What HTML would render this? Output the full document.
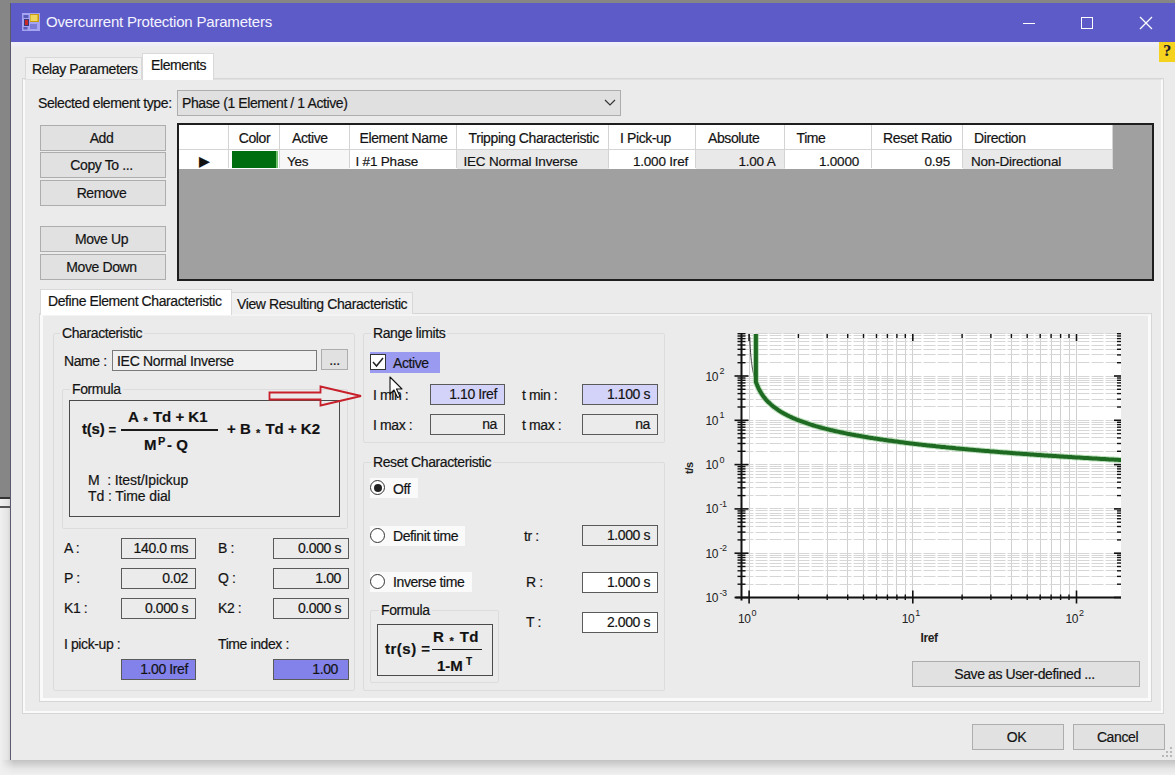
<!DOCTYPE html>
<html><head><meta charset="utf-8">
<style>
*{box-sizing:border-box;margin:0;padding:0}
html,body{width:1175px;height:775px;overflow:hidden;background:#868686}
body{position:relative;font-family:"Liberation Sans",sans-serif;font-size:14px;color:#111;letter-spacing:-0.4px;-webkit-text-stroke:0.2px #222}
.a{position:absolute}
.win{left:10px;top:3px;width:1170px;height:757px;background:#ebebeb;border-left:1px solid #5a5a6c}
.title{left:11px;top:3px;width:1164px;height:38.5px;background:#5d5bc8}
.ttl{left:46px;top:13px;color:#f4f4ff;font-size:15px;letter-spacing:-0.2px;-webkit-text-stroke:0}
.btn{background:#e1e1e1;border:1px solid #adadad;text-align:center;line-height:24.5px;padding-right:3px}
.tb{background:#ebebeb;border:1px solid #5a5a5a;text-align:right;padding-right:7px;line-height:18px}
.grp{border:1px solid #dcdcdc;border-radius:2px}
.gt{background:#ebebeb;padding:0 2px;line-height:16px}
.lbl{line-height:16px}
.fb{font-weight:bold;font-size:15px;line-height:16px;letter-spacing:0}
.ast{font-size:11px;position:relative;top:2.5px;padding:0 1px}
.rad{width:15px;height:15px;border:1px solid #333;border-radius:50%;background:#fff}
.gh{height:24px;line-height:27px;overflow:hidden;white-space:nowrap}
.gd{height:18.5px;line-height:24px;overflow:hidden;white-space:nowrap;font-size:13.5px;letter-spacing:-0.2px}
</style></head><body>
<!-- background left lower -->
<div class="a" style="left:0;top:497px;width:11px;height:278px;background:linear-gradient(90deg,#f0f0f0,#e4e4e4 70%,#d0d0d0)"></div>
<div class="a" style="left:0;top:497px;width:11px;height:2px;background:#333"></div>
<div class="a" style="left:0;top:506px;width:11px;height:2px;background:#555"></div>
<div class="a" style="left:0;top:760px;width:1175px;height:15px;background:linear-gradient(#c2c2c2,#e6e6e6 60%,#f0f0f0)"></div><div class="a" style="left:0;top:760px;width:14px;height:15px;background:linear-gradient(90deg,#f0f0f0,rgba(240,240,240,0))"></div>
<div class="a win"></div>
<div class="a title"></div>
<div class="a" style="left:11px;top:41.5px;width:1164px;height:7px;background:linear-gradient(#f0f0fc,#ebebeb)"></div>
<!-- app icon -->
<svg class="a" style="left:22px;top:13px" width="18" height="18"><rect x="0" y="0" width="18" height="18" fill="#a4a4f2"/><rect x="1.5" y="2" width="5" height="3" fill="#5a5ab8"/><rect x="8" y="1" width="9" height="8" fill="#c79a10"/><rect x="8.5" y="2" width="7" height="6" fill="#f0d860"/><rect x="2" y="6" width="5" height="7" fill="#3a3a7a"/><rect x="3" y="7" width="3" height="5" fill="#c82828"/><rect x="1.5" y="14" width="4" height="2.5" fill="#5a5ab8"/><rect x="8" y="11" width="7" height="5" fill="#7c7cd8"/></svg>
<div class="a ttl">Overcurrent Protection Parameters</div>
<!-- window controls -->
<div class="a" style="left:1023px;top:22.5px;width:12px;height:1px;background:#fff"></div>
<div class="a" style="left:1081px;top:17px;width:12px;height:12px;border:1px solid #fff"></div>
<svg class="a" style="left:1139px;top:16px" width="14" height="14"><path d="M1 1L13 13M13 1L1 13" stroke="#fff" stroke-width="1.3"/></svg>
<!-- help -->
<div class="a" style="left:1159px;top:42px;width:16px;height:20px;background:#f5d21e;font-weight:bold;font-size:16px;line-height:17px;text-align:center;color:#1a1a2a;font-family:'Liberation Serif',serif">?</div>

<!-- outer tabs -->
<div class="a" style="left:22px;top:78px;width:1142px;height:636px;border:1px solid #d6d6d6"></div><div class="a" style="left:23px;top:79px;width:1140px;height:634px;border:2px solid #fafafa;border-top:1px solid #e0e0e0"></div>
<div class="a" style="left:25px;top:57px;width:117px;height:22px;border:1px solid #d9d9d9;border-bottom:none;background:#f0f0f0"></div>
<div class="a lbl" style="left:32px;top:61px">Relay Parameters</div>
<div class="a" style="left:142px;top:53px;width:72px;height:27px;border:1px solid #d9d9d9;border-bottom:none;background:#fff"></div>
<div class="a lbl" style="left:151px;top:57px">Elements</div>

<div class="a lbl" style="left:38px;top:95px">Selected element type:</div>
<div class="a" style="left:177px;top:90px;width:444px;height:26px;background:#e0e0e0;border:1px solid #adadad"></div>
<div class="a lbl" style="left:182px;top:95px">Phase (1 Element / 1 Active)</div>
<svg class="a" style="left:604px;top:99px" width="12" height="8"><path d="M1 1L6 6L11 1" stroke="#333" fill="none" stroke-width="1.2"/></svg>

<!-- left buttons -->
<div class="a btn" style="left:40px;top:125px;width:126px;height:26px">Add</div>
<div class="a btn" style="left:40px;top:152px;width:126px;height:26px">Copy To ...</div>
<div class="a btn" style="left:40px;top:180px;width:126px;height:26px">Remove</div>
<div class="a btn" style="left:40px;top:226px;width:126px;height:26px">Move Up</div>
<div class="a btn" style="left:40px;top:254px;width:126px;height:26px">Move Down</div>

<!-- grid -->
<div class="a" style="left:177px;top:123px;width:977px;height:158px;background:#a0a0a0;border:2px solid #1e1e1e"></div>
<div class="a" style="left:179px;top:125px;width:934px;height:25px;background:#fff"></div>
<div class="a gh" style="left:179px;top:125px;width:50px;text-align:center;"></div>
<div class="a gh" style="left:229px;top:125px;width:51px;text-align:center;">Color</div>
<div class="a gh" style="left:280px;top:125px;width:69.5px;text-align:left;padding-left:12px;">Active</div>
<div class="a gh" style="left:349.5px;top:125px;width:107.0px;text-align:left;padding-left:10px;">Element Name</div>
<div class="a gh" style="left:456.5px;top:125px;width:152.5px;text-align:left;padding-left:12px;">Tripping Characteristic</div>
<div class="a gh" style="left:609px;top:125px;width:87px;text-align:left;padding-left:11px;">I Pick-up</div>
<div class="a gh" style="left:696px;top:125px;width:88.5px;text-align:left;padding-left:12px;">Absolute</div>
<div class="a gh" style="left:784.5px;top:125px;width:87.5px;text-align:left;padding-left:12px;">Time</div>
<div class="a gh" style="left:872px;top:125px;width:91px;text-align:left;padding-left:11px;">Reset Ratio</div>
<div class="a gh" style="left:963px;top:125px;width:150px;text-align:left;padding-left:11px;">Direction</div>
<div class="a gd" style="left:179px;top:150px;width:50px;background:#fff;text-align:center;">▶</div>
<div class="a gd" style="left:229px;top:150px;width:51px;background:#fff;text-align:center;"></div>
<div class="a gd" style="left:280px;top:150px;width:69.5px;background:#f7f7f7;text-align:left;padding-left:7px;">Yes</div>
<div class="a gd" style="left:349.5px;top:150px;width:107.0px;background:#fff;text-align:left;padding-left:6px;">I #1 Phase</div>
<div class="a gd" style="left:456.5px;top:150px;width:152.5px;background:#e9e9e9;text-align:left;padding-left:7px;">IEC Normal Inverse</div>
<div class="a gd" style="left:609px;top:150px;width:87px;background:#fff;text-align:right;padding-right:8px;">1.000 Iref</div>
<div class="a gd" style="left:696px;top:150px;width:88.5px;background:#e9e9e9;text-align:right;padding-right:9px;">1.00 A</div>
<div class="a gd" style="left:784.5px;top:150px;width:87.5px;background:#fff;text-align:right;padding-right:13px;">1.0000</div>
<div class="a gd" style="left:872px;top:150px;width:91px;background:#fff;text-align:right;padding-right:13px;">0.95</div>
<div class="a gd" style="left:963px;top:150px;width:150px;background:#e9e9e9;text-align:left;padding-left:8px;">Non-Directional</div>
<div class="a" style="left:228px;top:125px;width:1px;height:43px;background:#d4d4d4"></div>
<div class="a" style="left:279px;top:125px;width:1px;height:43px;background:#d4d4d4"></div>
<div class="a" style="left:348.5px;top:125px;width:1px;height:43px;background:#d4d4d4"></div>
<div class="a" style="left:455.5px;top:125px;width:1px;height:43px;background:#d4d4d4"></div>
<div class="a" style="left:608px;top:125px;width:1px;height:43px;background:#d4d4d4"></div>
<div class="a" style="left:695px;top:125px;width:1px;height:43px;background:#d4d4d4"></div>
<div class="a" style="left:783.5px;top:125px;width:1px;height:43px;background:#d4d4d4"></div>
<div class="a" style="left:871px;top:125px;width:1px;height:43px;background:#d4d4d4"></div>
<div class="a" style="left:962px;top:125px;width:1px;height:43px;background:#d4d4d4"></div>
<div class="a" style="left:1112px;top:125px;width:1px;height:43px;background:#d4d4d4"></div>
<div class="a" style="left:179px;top:149px;width:934px;height:1px;background:#d4d4d4"></div>
<div class="a" style="left:232px;top:151px;width:46px;height:17px;background:#006e0e;border-right:2px solid #6fbf6f"></div>

<!-- inner tabs -->
<div class="a" style="left:39px;top:313px;width:1113px;height:389px;border:1px solid #d6d6d6"></div><div class="a" style="left:40px;top:314px;width:1111px;height:387px;border:3px solid #fafafa;border-top:2px solid #f4f4f4"></div>
<div class="a" style="left:40px;top:289px;width:192px;height:26px;border:1px solid #d9d9d9;border-bottom:none;background:#fff"></div>
<div class="a lbl" style="left:48px;top:293px">Define Element Characteristic</div>
<div class="a" style="left:231px;top:292px;width:182px;height:22px;border:1px solid #d9d9d9;border-bottom:none;background:#f0f0f0"></div>
<div class="a lbl" style="left:237px;top:296px">View Resulting Characteristic</div>

<!-- Characteristic group -->
<div class="a grp" style="left:53px;top:333px;width:302px;height:358px"></div>
<div class="a gt" style="left:60px;top:325px">Characteristic</div>
<div class="a lbl" style="left:64px;top:353px">Name :</div>
<div class="a" style="left:112px;top:350px;width:205px;height:21px;background:#f0f0f0;border:1px solid #7a7a7a"></div>
<div class="a lbl" style="left:117px;top:353px;font-size:14px;letter-spacing:-0.3px">IEC Normal Inverse</div>
<div class="a btn" style="left:321px;top:349px;width:27px;height:21px;line-height:21px;padding:0">...</div>

<div class="a grp" style="left:62px;top:389px;width:286px;height:140px"></div>
<div class="a gt" style="left:70px;top:381px">Formula</div>
<div class="a" style="left:69px;top:400px;width:271px;height:117px;border:1.5px solid #4a4a4a"></div>

<div class="a fb" style="left:82px;top:421px;letter-spacing:-0.2px">t(s) <span style="font-size:13px">=</span></div>
<div class="a fb" style="left:128px;top:409px">A <span class="ast">*</span> Td + K1</div>
<div class="a" style="left:121px;top:429px;width:97px;height:1.6px;background:#1a1a1a"></div>
<div class="a fb" style="left:144px;top:437px">M</div>
<div class="a fb" style="left:158px;top:433px;font-size:11px">P</div>
<div class="a fb" style="left:167px;top:437px">- Q</div>
<div class="a fb" style="left:227px;top:421px">+ B <span class="ast">*</span> Td + K2</div>
<div class="a lbl" style="left:88px;top:472px;font-size:14px;letter-spacing:-0.1px">M&nbsp; : Itest/Ipickup</div>
<div class="a lbl" style="left:88px;top:488px;font-size:14px;letter-spacing:-0.1px">Td : Time dial</div>
<svg class="a" style="left:268px;top:384px" width="98" height="24"><path d="M1.5 8.5H52.5V2.5L93 12L52.5 21.5V15.5H1.5Z" fill="none" stroke="#c8202a" stroke-width="1.8"/></svg>


<!-- A..K2 -->
<div class="a lbl" style="left:64px;top:540px">A :</div>
<div class="a tb" style="left:121px;top:538px;width:75px;height:21px">140.0 ms</div>
<div class="a lbl" style="left:218px;top:540px">B :</div>
<div class="a tb" style="left:273px;top:538px;width:76px;height:21px">0.000 s</div>
<div class="a lbl" style="left:64px;top:570px">P :</div>
<div class="a tb" style="left:121px;top:568px;width:75px;height:21px">0.02</div>
<div class="a lbl" style="left:218px;top:570px">Q :</div>
<div class="a tb" style="left:273px;top:568px;width:76px;height:21px">1.00</div>
<div class="a lbl" style="left:64px;top:600px">K1 :</div>
<div class="a tb" style="left:121px;top:598px;width:75px;height:21px">0.000 s</div>
<div class="a lbl" style="left:218px;top:600px">K2 :</div>
<div class="a tb" style="left:273px;top:598px;width:76px;height:21px">0.000 s</div>
<div class="a lbl" style="left:64px;top:636px">I pick-up :</div>
<div class="a lbl" style="left:218px;top:636px">Time index :</div>
<div class="a tb" style="left:121px;top:659px;width:75px;height:21px;background:#8282ea">1.00 Iref</div>
<div class="a tb" style="left:273px;top:659px;width:76px;height:21px;background:#8282ea;padding-right:10px">1.00</div>

<!-- Range limits -->
<div class="a grp" style="left:363px;top:333px;width:302px;height:110px"></div>
<div class="a gt" style="left:371px;top:325px">Range limits</div>
<div class="a" style="left:370px;top:352px;width:70px;height:21px;background:#9a9af0"></div>
<div class="a" style="left:370px;top:354px;width:16px;height:16px;border:1px solid #333;background:#fff"></div>
<svg class="a" style="left:371px;top:355px" width="14" height="14"><path d="M2 7L5.5 11L12 3" stroke="#222" fill="none" stroke-width="1.5"/></svg>
<div class="a lbl" style="left:393px;top:355px">Active</div>
<div class="a lbl" style="left:373px;top:387px">I min :</div>
<div class="a tb" style="left:430px;top:384px;width:75px;height:21px;background:#d3d3fa">1.10 Iref</div>
<div class="a lbl" style="left:522px;top:387px">t min :</div>
<div class="a tb" style="left:582px;top:384px;width:76px;height:21px;background:#d3d3fa">1.100 s</div>
<div class="a lbl" style="left:373px;top:417px">I max :</div>
<div class="a tb" style="left:430px;top:414px;width:75px;height:21px">na</div>
<div class="a lbl" style="left:522px;top:417px">t max :</div>
<div class="a tb" style="left:582px;top:414px;width:76px;height:21px">na</div>

<!-- Reset characteristic -->
<div class="a grp" style="left:363px;top:462px;width:302px;height:229px"></div>
<div class="a gt" style="left:371px;top:454px">Reset Characteristic</div>

<div class="a" style="left:370px;top:478px;width:48px;height:20px;background:#fafafa"></div>
<div class="a rad" style="left:370px;top:480px"></div>
<div class="a" style="left:373.5px;top:483.5px;width:8px;height:8px;border-radius:50%;background:#222"></div>
<div class="a lbl" style="left:393px;top:481px">Off</div>
<div class="a" style="left:370px;top:526px;width:95px;height:20px;background:#fafafa"></div>
<div class="a rad" style="left:370px;top:528px"></div>
<div class="a lbl" style="left:393px;top:528px">Definit time</div>
<div class="a" style="left:370px;top:572px;width:102px;height:20px;background:#fafafa"></div>
<div class="a rad" style="left:370px;top:574px"></div>
<div class="a lbl" style="left:393px;top:574px">Inverse time</div>
<div class="a lbl" style="left:524px;top:528px">tr :</div>
<div class="a tb" style="left:582px;top:525px;width:76px;height:21px">1.000 s</div>
<div class="a lbl" style="left:526px;top:574px">R :</div>
<div class="a tb" style="left:582px;top:572px;width:76px;height:21px;background:#fff">1.000 s</div>
<div class="a lbl" style="left:526px;top:614px">T :</div>
<div class="a tb" style="left:582px;top:612px;width:76px;height:21px;background:#fff">2.000 s</div>
<div class="a grp" style="left:370px;top:610px;width:129px;height:73px"></div>
<div class="a gt" style="left:379px;top:602px">Formula</div>
<div class="a" style="left:377px;top:624px;width:116px;height:52px;border:1.5px solid #4a4a4a"></div>
<div class="a fb" style="left:385px;top:641px;font-size:15px;letter-spacing:0.5px">tr(s) =</div>
<div class="a fb" style="left:433px;top:629px;letter-spacing:0.3px">R <span class="ast">*</span> Td</div>
<div class="a" style="left:432px;top:648.5px;width:50px;height:1.5px;background:#1a1a1a"></div>
<div class="a fb" style="left:437px;top:658px">1-M</div>
<div class="a fb" style="left:466px;top:654px;font-size:10px">T</div>
<svg class="a" style="left:389px;top:376px" width="16" height="24"><path d="M1 1V18L5 14L8.5 21.5L11 20.5L7.5 13H13Z" fill="#fff" stroke="#111" stroke-width="1.1" stroke-linejoin="round"/></svg>


<!-- chart -->
<svg class="a" style="left:0;top:0" width="1175" height="775">
<defs><clipPath id="pc"><rect x="741.5" y="331" width="379.5" height="266.5"/></clipPath></defs>
<rect x="741.5" y="334" width="379.5" height="263.5" fill="#fff"/>
<line x1="749.5" y1="334" x2="749.5" y2="597.5" stroke="#d0d0d0" stroke-width="1"/>
<line x1="798.5" y1="334" x2="798.5" y2="597.5" stroke="#d0d0d0" stroke-width="1"/>
<line x1="827.5" y1="334" x2="827.5" y2="597.5" stroke="#d0d0d0" stroke-width="1"/>
<line x1="847.5" y1="334" x2="847.5" y2="597.5" stroke="#d0d0d0" stroke-width="1"/>
<line x1="863.5" y1="334" x2="863.5" y2="597.5" stroke="#d0d0d0" stroke-width="1"/>
<line x1="876.5" y1="334" x2="876.5" y2="597.5" stroke="#d0d0d0" stroke-width="1"/>
<line x1="887.5" y1="334" x2="887.5" y2="597.5" stroke="#d0d0d0" stroke-width="1"/>
<line x1="896.5" y1="334" x2="896.5" y2="597.5" stroke="#d0d0d0" stroke-width="1"/>
<line x1="905.5" y1="334" x2="905.5" y2="597.5" stroke="#d0d0d0" stroke-width="1"/>
<line x1="912.5" y1="334" x2="912.5" y2="597.5" stroke="#d0d0d0" stroke-width="1"/>
<line x1="962.5" y1="334" x2="962.5" y2="597.5" stroke="#d0d0d0" stroke-width="1"/>
<line x1="990.5" y1="334" x2="990.5" y2="597.5" stroke="#d0d0d0" stroke-width="1"/>
<line x1="1011.5" y1="334" x2="1011.5" y2="597.5" stroke="#d0d0d0" stroke-width="1"/>
<line x1="1027.5" y1="334" x2="1027.5" y2="597.5" stroke="#d0d0d0" stroke-width="1"/>
<line x1="1040.5" y1="334" x2="1040.5" y2="597.5" stroke="#d0d0d0" stroke-width="1"/>
<line x1="1051.5" y1="334" x2="1051.5" y2="597.5" stroke="#d0d0d0" stroke-width="1"/>
<line x1="1060.5" y1="334" x2="1060.5" y2="597.5" stroke="#d0d0d0" stroke-width="1"/>
<line x1="1069.5" y1="334" x2="1069.5" y2="597.5" stroke="#d0d0d0" stroke-width="1"/>
<line x1="1076.5" y1="334" x2="1076.5" y2="597.5" stroke="#d0d0d0" stroke-width="1"/>
<line x1="741.5" y1="584.5" x2="1121" y2="584.5" stroke="#d6d6d6" stroke-width="1" stroke-dasharray="12 2"/>
<line x1="741.5" y1="576.5" x2="1121" y2="576.5" stroke="#d6d6d6" stroke-width="1" stroke-dasharray="12 2"/>
<line x1="741.5" y1="570.5" x2="1121" y2="570.5" stroke="#d6d6d6" stroke-width="1" stroke-dasharray="12 2"/>
<line x1="741.5" y1="566.5" x2="1121" y2="566.5" stroke="#d6d6d6" stroke-width="1" stroke-dasharray="12 2"/>
<line x1="741.5" y1="563.5" x2="1121" y2="563.5" stroke="#d6d6d6" stroke-width="1" stroke-dasharray="12 2"/>
<line x1="741.5" y1="560.5" x2="1121" y2="560.5" stroke="#d6d6d6" stroke-width="1" stroke-dasharray="12 2"/>
<line x1="741.5" y1="557.5" x2="1121" y2="557.5" stroke="#d6d6d6" stroke-width="1" stroke-dasharray="12 2"/>
<line x1="741.5" y1="555.5" x2="1121" y2="555.5" stroke="#d6d6d6" stroke-width="1" stroke-dasharray="12 2"/>
<line x1="741.5" y1="553.5" x2="1121" y2="553.5" stroke="#d6d6d6" stroke-width="1" stroke-dasharray="12 2"/>
<line x1="741.5" y1="539.5" x2="1121" y2="539.5" stroke="#d6d6d6" stroke-width="1" stroke-dasharray="12 2"/>
<line x1="741.5" y1="532.5" x2="1121" y2="532.5" stroke="#d6d6d6" stroke-width="1" stroke-dasharray="12 2"/>
<line x1="741.5" y1="526.5" x2="1121" y2="526.5" stroke="#d6d6d6" stroke-width="1" stroke-dasharray="12 2"/>
<line x1="741.5" y1="522.5" x2="1121" y2="522.5" stroke="#d6d6d6" stroke-width="1" stroke-dasharray="12 2"/>
<line x1="741.5" y1="518.5" x2="1121" y2="518.5" stroke="#d6d6d6" stroke-width="1" stroke-dasharray="12 2"/>
<line x1="741.5" y1="515.5" x2="1121" y2="515.5" stroke="#d6d6d6" stroke-width="1" stroke-dasharray="12 2"/>
<line x1="741.5" y1="513.5" x2="1121" y2="513.5" stroke="#d6d6d6" stroke-width="1" stroke-dasharray="12 2"/>
<line x1="741.5" y1="510.5" x2="1121" y2="510.5" stroke="#d6d6d6" stroke-width="1" stroke-dasharray="12 2"/>
<line x1="741.5" y1="508.5" x2="1121" y2="508.5" stroke="#d6d6d6" stroke-width="1" stroke-dasharray="12 2"/>
<line x1="741.5" y1="495.5" x2="1121" y2="495.5" stroke="#d6d6d6" stroke-width="1" stroke-dasharray="12 2"/>
<line x1="741.5" y1="487.5" x2="1121" y2="487.5" stroke="#d6d6d6" stroke-width="1" stroke-dasharray="12 2"/>
<line x1="741.5" y1="482.5" x2="1121" y2="482.5" stroke="#d6d6d6" stroke-width="1" stroke-dasharray="12 2"/>
<line x1="741.5" y1="477.5" x2="1121" y2="477.5" stroke="#d6d6d6" stroke-width="1" stroke-dasharray="12 2"/>
<line x1="741.5" y1="474.5" x2="1121" y2="474.5" stroke="#d6d6d6" stroke-width="1" stroke-dasharray="12 2"/>
<line x1="741.5" y1="471.5" x2="1121" y2="471.5" stroke="#d6d6d6" stroke-width="1" stroke-dasharray="12 2"/>
<line x1="741.5" y1="468.5" x2="1121" y2="468.5" stroke="#d6d6d6" stroke-width="1" stroke-dasharray="12 2"/>
<line x1="741.5" y1="466.5" x2="1121" y2="466.5" stroke="#d6d6d6" stroke-width="1" stroke-dasharray="12 2"/>
<line x1="741.5" y1="464.5" x2="1121" y2="464.5" stroke="#d6d6d6" stroke-width="1" stroke-dasharray="12 2"/>
<line x1="741.5" y1="451.5" x2="1121" y2="451.5" stroke="#d6d6d6" stroke-width="1" stroke-dasharray="12 2"/>
<line x1="741.5" y1="443.5" x2="1121" y2="443.5" stroke="#d6d6d6" stroke-width="1" stroke-dasharray="12 2"/>
<line x1="741.5" y1="437.5" x2="1121" y2="437.5" stroke="#d6d6d6" stroke-width="1" stroke-dasharray="12 2"/>
<line x1="741.5" y1="433.5" x2="1121" y2="433.5" stroke="#d6d6d6" stroke-width="1" stroke-dasharray="12 2"/>
<line x1="741.5" y1="430.5" x2="1121" y2="430.5" stroke="#d6d6d6" stroke-width="1" stroke-dasharray="12 2"/>
<line x1="741.5" y1="427.5" x2="1121" y2="427.5" stroke="#d6d6d6" stroke-width="1" stroke-dasharray="12 2"/>
<line x1="741.5" y1="424.5" x2="1121" y2="424.5" stroke="#d6d6d6" stroke-width="1" stroke-dasharray="12 2"/>
<line x1="741.5" y1="422.5" x2="1121" y2="422.5" stroke="#d6d6d6" stroke-width="1" stroke-dasharray="12 2"/>
<line x1="741.5" y1="420.5" x2="1121" y2="420.5" stroke="#d6d6d6" stroke-width="1" stroke-dasharray="12 2"/>
<line x1="741.5" y1="406.5" x2="1121" y2="406.5" stroke="#d6d6d6" stroke-width="1" stroke-dasharray="12 2"/>
<line x1="741.5" y1="399.5" x2="1121" y2="399.5" stroke="#d6d6d6" stroke-width="1" stroke-dasharray="12 2"/>
<line x1="741.5" y1="393.5" x2="1121" y2="393.5" stroke="#d6d6d6" stroke-width="1" stroke-dasharray="12 2"/>
<line x1="741.5" y1="389.5" x2="1121" y2="389.5" stroke="#d6d6d6" stroke-width="1" stroke-dasharray="12 2"/>
<line x1="741.5" y1="385.5" x2="1121" y2="385.5" stroke="#d6d6d6" stroke-width="1" stroke-dasharray="12 2"/>
<line x1="741.5" y1="382.5" x2="1121" y2="382.5" stroke="#d6d6d6" stroke-width="1" stroke-dasharray="12 2"/>
<line x1="741.5" y1="380.5" x2="1121" y2="380.5" stroke="#d6d6d6" stroke-width="1" stroke-dasharray="12 2"/>
<line x1="741.5" y1="378.5" x2="1121" y2="378.5" stroke="#d6d6d6" stroke-width="1" stroke-dasharray="12 2"/>
<line x1="741.5" y1="376.5" x2="1121" y2="376.5" stroke="#d6d6d6" stroke-width="1" stroke-dasharray="12 2"/>
<line x1="741.5" y1="362.5" x2="1121" y2="362.5" stroke="#d6d6d6" stroke-width="1" stroke-dasharray="12 2"/>
<line x1="741.5" y1="354.5" x2="1121" y2="354.5" stroke="#d6d6d6" stroke-width="1" stroke-dasharray="12 2"/>
<line x1="741.5" y1="349.5" x2="1121" y2="349.5" stroke="#d6d6d6" stroke-width="1" stroke-dasharray="12 2"/>
<line x1="741.5" y1="345.5" x2="1121" y2="345.5" stroke="#d6d6d6" stroke-width="1" stroke-dasharray="12 2"/>
<line x1="741.5" y1="341.5" x2="1121" y2="341.5" stroke="#d6d6d6" stroke-width="1" stroke-dasharray="12 2"/>
<line x1="741.5" y1="338.5" x2="1121" y2="338.5" stroke="#d6d6d6" stroke-width="1" stroke-dasharray="12 2"/>
<line x1="741.5" y1="335.5" x2="1121" y2="335.5" stroke="#d6d6d6" stroke-width="1" stroke-dasharray="12 2"/>
<line x1="741.5" y1="333.5" x2="1121" y2="333.5" stroke="#d6d6d6" stroke-width="1" stroke-dasharray="12 2"/>
<line x1="741.5" y1="334" x2="741.5" y2="600.5" stroke="#111" stroke-width="2"/>
<line x1="735.5" y1="597.5" x2="1121" y2="597.5" stroke="#111" stroke-width="2"/>
<line x1="734.5" y1="597.5" x2="748.5" y2="597.5" stroke="#111" stroke-width="1.6"/>
<line x1="1114" y1="597.5" x2="1121" y2="597.5" stroke="#111" stroke-width="1.6"/>
<line x1="737.5" y1="584.2" x2="745.5" y2="584.2" stroke="#111" stroke-width="1.4"/>
<line x1="1117" y1="584.2" x2="1121" y2="584.2" stroke="#111" stroke-width="1.4"/>
<line x1="737.5" y1="576.4" x2="745.5" y2="576.4" stroke="#111" stroke-width="1.4"/>
<line x1="1117" y1="576.4" x2="1121" y2="576.4" stroke="#111" stroke-width="1.4"/>
<line x1="737.5" y1="570.8" x2="745.5" y2="570.8" stroke="#111" stroke-width="1.4"/>
<line x1="1117" y1="570.8" x2="1121" y2="570.8" stroke="#111" stroke-width="1.4"/>
<line x1="737.5" y1="566.5" x2="745.5" y2="566.5" stroke="#111" stroke-width="1.4"/>
<line x1="1117" y1="566.5" x2="1121" y2="566.5" stroke="#111" stroke-width="1.4"/>
<line x1="737.5" y1="563.0" x2="745.5" y2="563.0" stroke="#111" stroke-width="1.4"/>
<line x1="1117" y1="563.0" x2="1121" y2="563.0" stroke="#111" stroke-width="1.4"/>
<line x1="737.5" y1="560.1" x2="745.5" y2="560.1" stroke="#111" stroke-width="1.4"/>
<line x1="1117" y1="560.1" x2="1121" y2="560.1" stroke="#111" stroke-width="1.4"/>
<line x1="737.5" y1="557.5" x2="745.5" y2="557.5" stroke="#111" stroke-width="1.4"/>
<line x1="1117" y1="557.5" x2="1121" y2="557.5" stroke="#111" stroke-width="1.4"/>
<line x1="737.5" y1="555.2" x2="745.5" y2="555.2" stroke="#111" stroke-width="1.4"/>
<line x1="1117" y1="555.2" x2="1121" y2="555.2" stroke="#111" stroke-width="1.4"/>
<line x1="734.5" y1="553.2" x2="748.5" y2="553.2" stroke="#111" stroke-width="1.6"/>
<line x1="1114" y1="553.2" x2="1121" y2="553.2" stroke="#111" stroke-width="1.6"/>
<line x1="737.5" y1="539.9" x2="745.5" y2="539.9" stroke="#111" stroke-width="1.4"/>
<line x1="1117" y1="539.9" x2="1121" y2="539.9" stroke="#111" stroke-width="1.4"/>
<line x1="737.5" y1="532.1" x2="745.5" y2="532.1" stroke="#111" stroke-width="1.4"/>
<line x1="1117" y1="532.1" x2="1121" y2="532.1" stroke="#111" stroke-width="1.4"/>
<line x1="737.5" y1="526.5" x2="745.5" y2="526.5" stroke="#111" stroke-width="1.4"/>
<line x1="1117" y1="526.5" x2="1121" y2="526.5" stroke="#111" stroke-width="1.4"/>
<line x1="737.5" y1="522.2" x2="745.5" y2="522.2" stroke="#111" stroke-width="1.4"/>
<line x1="1117" y1="522.2" x2="1121" y2="522.2" stroke="#111" stroke-width="1.4"/>
<line x1="737.5" y1="518.7" x2="745.5" y2="518.7" stroke="#111" stroke-width="1.4"/>
<line x1="1117" y1="518.7" x2="1121" y2="518.7" stroke="#111" stroke-width="1.4"/>
<line x1="737.5" y1="515.8" x2="745.5" y2="515.8" stroke="#111" stroke-width="1.4"/>
<line x1="1117" y1="515.8" x2="1121" y2="515.8" stroke="#111" stroke-width="1.4"/>
<line x1="737.5" y1="513.2" x2="745.5" y2="513.2" stroke="#111" stroke-width="1.4"/>
<line x1="1117" y1="513.2" x2="1121" y2="513.2" stroke="#111" stroke-width="1.4"/>
<line x1="737.5" y1="510.9" x2="745.5" y2="510.9" stroke="#111" stroke-width="1.4"/>
<line x1="1117" y1="510.9" x2="1121" y2="510.9" stroke="#111" stroke-width="1.4"/>
<line x1="734.5" y1="508.9" x2="748.5" y2="508.9" stroke="#111" stroke-width="1.6"/>
<line x1="1114" y1="508.9" x2="1121" y2="508.9" stroke="#111" stroke-width="1.6"/>
<line x1="737.5" y1="495.6" x2="745.5" y2="495.6" stroke="#111" stroke-width="1.4"/>
<line x1="1117" y1="495.6" x2="1121" y2="495.6" stroke="#111" stroke-width="1.4"/>
<line x1="737.5" y1="487.8" x2="745.5" y2="487.8" stroke="#111" stroke-width="1.4"/>
<line x1="1117" y1="487.8" x2="1121" y2="487.8" stroke="#111" stroke-width="1.4"/>
<line x1="737.5" y1="482.2" x2="745.5" y2="482.2" stroke="#111" stroke-width="1.4"/>
<line x1="1117" y1="482.2" x2="1121" y2="482.2" stroke="#111" stroke-width="1.4"/>
<line x1="737.5" y1="477.9" x2="745.5" y2="477.9" stroke="#111" stroke-width="1.4"/>
<line x1="1117" y1="477.9" x2="1121" y2="477.9" stroke="#111" stroke-width="1.4"/>
<line x1="737.5" y1="474.4" x2="745.5" y2="474.4" stroke="#111" stroke-width="1.4"/>
<line x1="1117" y1="474.4" x2="1121" y2="474.4" stroke="#111" stroke-width="1.4"/>
<line x1="737.5" y1="471.5" x2="745.5" y2="471.5" stroke="#111" stroke-width="1.4"/>
<line x1="1117" y1="471.5" x2="1121" y2="471.5" stroke="#111" stroke-width="1.4"/>
<line x1="737.5" y1="468.9" x2="745.5" y2="468.9" stroke="#111" stroke-width="1.4"/>
<line x1="1117" y1="468.9" x2="1121" y2="468.9" stroke="#111" stroke-width="1.4"/>
<line x1="737.5" y1="466.6" x2="745.5" y2="466.6" stroke="#111" stroke-width="1.4"/>
<line x1="1117" y1="466.6" x2="1121" y2="466.6" stroke="#111" stroke-width="1.4"/>
<line x1="734.5" y1="464.6" x2="748.5" y2="464.6" stroke="#111" stroke-width="1.6"/>
<line x1="1114" y1="464.6" x2="1121" y2="464.6" stroke="#111" stroke-width="1.6"/>
<line x1="737.5" y1="451.3" x2="745.5" y2="451.3" stroke="#111" stroke-width="1.4"/>
<line x1="1117" y1="451.3" x2="1121" y2="451.3" stroke="#111" stroke-width="1.4"/>
<line x1="737.5" y1="443.5" x2="745.5" y2="443.5" stroke="#111" stroke-width="1.4"/>
<line x1="1117" y1="443.5" x2="1121" y2="443.5" stroke="#111" stroke-width="1.4"/>
<line x1="737.5" y1="437.9" x2="745.5" y2="437.9" stroke="#111" stroke-width="1.4"/>
<line x1="1117" y1="437.9" x2="1121" y2="437.9" stroke="#111" stroke-width="1.4"/>
<line x1="737.5" y1="433.6" x2="745.5" y2="433.6" stroke="#111" stroke-width="1.4"/>
<line x1="1117" y1="433.6" x2="1121" y2="433.6" stroke="#111" stroke-width="1.4"/>
<line x1="737.5" y1="430.1" x2="745.5" y2="430.1" stroke="#111" stroke-width="1.4"/>
<line x1="1117" y1="430.1" x2="1121" y2="430.1" stroke="#111" stroke-width="1.4"/>
<line x1="737.5" y1="427.2" x2="745.5" y2="427.2" stroke="#111" stroke-width="1.4"/>
<line x1="1117" y1="427.2" x2="1121" y2="427.2" stroke="#111" stroke-width="1.4"/>
<line x1="737.5" y1="424.6" x2="745.5" y2="424.6" stroke="#111" stroke-width="1.4"/>
<line x1="1117" y1="424.6" x2="1121" y2="424.6" stroke="#111" stroke-width="1.4"/>
<line x1="737.5" y1="422.3" x2="745.5" y2="422.3" stroke="#111" stroke-width="1.4"/>
<line x1="1117" y1="422.3" x2="1121" y2="422.3" stroke="#111" stroke-width="1.4"/>
<line x1="734.5" y1="420.3" x2="748.5" y2="420.3" stroke="#111" stroke-width="1.6"/>
<line x1="1114" y1="420.3" x2="1121" y2="420.3" stroke="#111" stroke-width="1.6"/>
<line x1="737.5" y1="407.0" x2="745.5" y2="407.0" stroke="#111" stroke-width="1.4"/>
<line x1="1117" y1="407.0" x2="1121" y2="407.0" stroke="#111" stroke-width="1.4"/>
<line x1="737.5" y1="399.2" x2="745.5" y2="399.2" stroke="#111" stroke-width="1.4"/>
<line x1="1117" y1="399.2" x2="1121" y2="399.2" stroke="#111" stroke-width="1.4"/>
<line x1="737.5" y1="393.6" x2="745.5" y2="393.6" stroke="#111" stroke-width="1.4"/>
<line x1="1117" y1="393.6" x2="1121" y2="393.6" stroke="#111" stroke-width="1.4"/>
<line x1="737.5" y1="389.3" x2="745.5" y2="389.3" stroke="#111" stroke-width="1.4"/>
<line x1="1117" y1="389.3" x2="1121" y2="389.3" stroke="#111" stroke-width="1.4"/>
<line x1="737.5" y1="385.8" x2="745.5" y2="385.8" stroke="#111" stroke-width="1.4"/>
<line x1="1117" y1="385.8" x2="1121" y2="385.8" stroke="#111" stroke-width="1.4"/>
<line x1="737.5" y1="382.9" x2="745.5" y2="382.9" stroke="#111" stroke-width="1.4"/>
<line x1="1117" y1="382.9" x2="1121" y2="382.9" stroke="#111" stroke-width="1.4"/>
<line x1="737.5" y1="380.3" x2="745.5" y2="380.3" stroke="#111" stroke-width="1.4"/>
<line x1="1117" y1="380.3" x2="1121" y2="380.3" stroke="#111" stroke-width="1.4"/>
<line x1="737.5" y1="378.0" x2="745.5" y2="378.0" stroke="#111" stroke-width="1.4"/>
<line x1="1117" y1="378.0" x2="1121" y2="378.0" stroke="#111" stroke-width="1.4"/>
<line x1="734.5" y1="376.0" x2="748.5" y2="376.0" stroke="#111" stroke-width="1.6"/>
<line x1="1114" y1="376.0" x2="1121" y2="376.0" stroke="#111" stroke-width="1.6"/>
<line x1="737.5" y1="362.7" x2="745.5" y2="362.7" stroke="#111" stroke-width="1.4"/>
<line x1="1117" y1="362.7" x2="1121" y2="362.7" stroke="#111" stroke-width="1.4"/>
<line x1="737.5" y1="354.9" x2="745.5" y2="354.9" stroke="#111" stroke-width="1.4"/>
<line x1="1117" y1="354.9" x2="1121" y2="354.9" stroke="#111" stroke-width="1.4"/>
<line x1="737.5" y1="349.3" x2="745.5" y2="349.3" stroke="#111" stroke-width="1.4"/>
<line x1="1117" y1="349.3" x2="1121" y2="349.3" stroke="#111" stroke-width="1.4"/>
<line x1="737.5" y1="345.0" x2="745.5" y2="345.0" stroke="#111" stroke-width="1.4"/>
<line x1="1117" y1="345.0" x2="1121" y2="345.0" stroke="#111" stroke-width="1.4"/>
<line x1="737.5" y1="341.5" x2="745.5" y2="341.5" stroke="#111" stroke-width="1.4"/>
<line x1="1117" y1="341.5" x2="1121" y2="341.5" stroke="#111" stroke-width="1.4"/>
<line x1="737.5" y1="338.6" x2="745.5" y2="338.6" stroke="#111" stroke-width="1.4"/>
<line x1="1117" y1="338.6" x2="1121" y2="338.6" stroke="#111" stroke-width="1.4"/>
<line x1="737.5" y1="336.0" x2="745.5" y2="336.0" stroke="#111" stroke-width="1.4"/>
<line x1="1117" y1="336.0" x2="1121" y2="336.0" stroke="#111" stroke-width="1.4"/>
<line x1="737.5" y1="333.7" x2="745.5" y2="333.7" stroke="#111" stroke-width="1.4"/>
<line x1="1117" y1="333.7" x2="1121" y2="333.7" stroke="#111" stroke-width="1.4"/>
<line x1="749.1" y1="590.5" x2="749.1" y2="603.5" stroke="#111" stroke-width="1.6"/>
<line x1="749.1" y1="334" x2="749.1" y2="341" stroke="#111" stroke-width="1.6"/>
<line x1="798.4" y1="594.5" x2="798.4" y2="600.0" stroke="#111" stroke-width="1.4"/>
<line x1="798.4" y1="334" x2="798.4" y2="338" stroke="#111" stroke-width="1.4"/>
<line x1="827.2" y1="594.5" x2="827.2" y2="600.0" stroke="#111" stroke-width="1.4"/>
<line x1="827.2" y1="334" x2="827.2" y2="338" stroke="#111" stroke-width="1.4"/>
<line x1="847.7" y1="594.5" x2="847.7" y2="600.0" stroke="#111" stroke-width="1.4"/>
<line x1="847.7" y1="334" x2="847.7" y2="338" stroke="#111" stroke-width="1.4"/>
<line x1="863.5" y1="594.5" x2="863.5" y2="600.0" stroke="#111" stroke-width="1.4"/>
<line x1="863.5" y1="334" x2="863.5" y2="338" stroke="#111" stroke-width="1.4"/>
<line x1="876.5" y1="594.5" x2="876.5" y2="600.0" stroke="#111" stroke-width="1.4"/>
<line x1="876.5" y1="334" x2="876.5" y2="338" stroke="#111" stroke-width="1.4"/>
<line x1="887.4" y1="594.5" x2="887.4" y2="600.0" stroke="#111" stroke-width="1.4"/>
<line x1="887.4" y1="334" x2="887.4" y2="338" stroke="#111" stroke-width="1.4"/>
<line x1="896.9" y1="594.5" x2="896.9" y2="600.0" stroke="#111" stroke-width="1.4"/>
<line x1="896.9" y1="334" x2="896.9" y2="338" stroke="#111" stroke-width="1.4"/>
<line x1="905.3" y1="594.5" x2="905.3" y2="600.0" stroke="#111" stroke-width="1.4"/>
<line x1="905.3" y1="334" x2="905.3" y2="338" stroke="#111" stroke-width="1.4"/>
<line x1="912.8" y1="590.5" x2="912.8" y2="603.5" stroke="#111" stroke-width="1.6"/>
<line x1="912.8" y1="334" x2="912.8" y2="341" stroke="#111" stroke-width="1.6"/>
<line x1="962.1" y1="594.5" x2="962.1" y2="600.0" stroke="#111" stroke-width="1.4"/>
<line x1="962.1" y1="334" x2="962.1" y2="338" stroke="#111" stroke-width="1.4"/>
<line x1="990.9" y1="594.5" x2="990.9" y2="600.0" stroke="#111" stroke-width="1.4"/>
<line x1="990.9" y1="334" x2="990.9" y2="338" stroke="#111" stroke-width="1.4"/>
<line x1="1011.4" y1="594.5" x2="1011.4" y2="600.0" stroke="#111" stroke-width="1.4"/>
<line x1="1011.4" y1="334" x2="1011.4" y2="338" stroke="#111" stroke-width="1.4"/>
<line x1="1027.2" y1="594.5" x2="1027.2" y2="600.0" stroke="#111" stroke-width="1.4"/>
<line x1="1027.2" y1="334" x2="1027.2" y2="338" stroke="#111" stroke-width="1.4"/>
<line x1="1040.2" y1="594.5" x2="1040.2" y2="600.0" stroke="#111" stroke-width="1.4"/>
<line x1="1040.2" y1="334" x2="1040.2" y2="338" stroke="#111" stroke-width="1.4"/>
<line x1="1051.1" y1="594.5" x2="1051.1" y2="600.0" stroke="#111" stroke-width="1.4"/>
<line x1="1051.1" y1="334" x2="1051.1" y2="338" stroke="#111" stroke-width="1.4"/>
<line x1="1060.6" y1="594.5" x2="1060.6" y2="600.0" stroke="#111" stroke-width="1.4"/>
<line x1="1060.6" y1="334" x2="1060.6" y2="338" stroke="#111" stroke-width="1.4"/>
<line x1="1069.0" y1="594.5" x2="1069.0" y2="600.0" stroke="#111" stroke-width="1.4"/>
<line x1="1069.0" y1="334" x2="1069.0" y2="338" stroke="#111" stroke-width="1.4"/>
<line x1="1076.5" y1="590.5" x2="1076.5" y2="603.5" stroke="#111" stroke-width="1.6"/>
<line x1="1076.5" y1="334" x2="1076.5" y2="341" stroke="#111" stroke-width="1.6"/>
<polyline fill="none" stroke="#333" stroke-width="1" points="749.8,336.9 749.9,340.6 750.0,343.8 750.2,346.5 750.3,348.8 750.5,350.9 750.6,352.8 750.7,354.5 750.9,356.1 751.0,357.6 751.1,358.9 751.3,360.2 751.4,361.3 751.6,362.4 751.7,363.5 751.8,364.5 752.0,365.4 752.1,366.3 752.2,367.2 752.4,368.0 752.5,368.8 752.6,369.5 752.8,370.2 752.9,370.9 753.1,371.6 753.2,372.2 753.3,372.9 753.5,373.5 753.6,374.0 753.7,374.6 753.9,375.1 754.0,375.7 754.1,376.2 754.3,376.7 754.4,377.2 754.5,377.7 754.7,378.1 754.8,378.6 754.9,379.0 755.0,379.4 755.2,379.9 755.3,380.3 755.4,380.7 755.6,381.1 755.7,381.4 755.8,381.8 755.9,382.0"/>
<g clip-path="url(#pc)">
<polyline fill="none" stroke="#8cc88c" stroke-opacity="0.6" stroke-width="6" stroke-linejoin="round" points="755.9,334.0 755.9,382.0 757.3,385.6 758.7,388.6 760.1,391.3 761.5,393.6 762.9,395.7 764.3,397.6 765.7,399.3 767.1,400.8 768.5,402.3 770.0,403.6 771.4,404.9 772.8,406.1 774.2,407.2 775.6,408.2 777.0,409.2 778.4,410.2 779.8,411.1 781.2,412.0 782.6,412.8 784.0,413.6 785.4,414.3 786.8,415.1 788.3,415.8 789.7,416.5 791.1,417.1 792.5,417.8 793.9,418.4 795.3,419.0 796.7,419.6 798.1,420.1 799.5,420.7 800.9,421.2 802.3,421.7 803.7,422.2 805.2,422.7 806.6,423.2 808.0,423.7 809.4,424.1 810.8,424.6 812.2,425.0 813.6,425.5 815.0,425.9 816.4,426.3 817.8,426.7 819.2,427.1 820.6,427.5 822.0,427.9 823.5,428.2 824.9,428.6 826.3,428.9 827.7,429.3 829.1,429.6 830.5,430.0 831.9,430.3 833.3,430.6 834.7,431.0 836.1,431.3 837.5,431.6 838.9,431.9 840.3,432.2 841.8,432.5 843.2,432.8 844.6,433.1 846.0,433.4 847.4,433.7 848.8,433.9 850.2,434.2 851.6,434.5 853.0,434.7 854.4,435.0 855.8,435.3 857.2,435.5 858.6,435.8 860.1,436.0 861.5,436.3 862.9,436.5 864.3,436.8 865.7,437.0 867.1,437.2 868.5,437.5 869.9,437.7 871.3,437.9 872.7,438.1 874.1,438.4 875.5,438.6 877.0,438.8 878.4,439.0 879.8,439.2 881.2,439.4 882.6,439.6 884.0,439.9 885.4,440.1 886.8,440.3 888.2,440.5 889.6,440.7 891.0,440.8 892.4,441.0 893.8,441.2 895.3,441.4 896.7,441.6 898.1,441.8 899.5,442.0 900.9,442.2 902.3,442.3 903.7,442.5 905.1,442.7 906.5,442.9 907.9,443.1 909.3,443.2 910.7,443.4 912.1,443.6 913.6,443.7 915.0,443.9 916.4,444.1 917.8,444.2 919.2,444.4 920.6,444.6 922.0,444.7 923.4,444.9 924.8,445.0 926.2,445.2 927.6,445.4 929.0,445.5 930.4,445.7 931.9,445.8 933.3,446.0 934.7,446.1 936.1,446.3 937.5,446.4 938.9,446.6 940.3,446.7 941.7,446.9 943.1,447.0 944.5,447.1 945.9,447.3 947.3,447.4 948.8,447.6 950.2,447.7 951.6,447.8 953.0,448.0 954.4,448.1 955.8,448.3 957.2,448.4 958.6,448.5 960.0,448.7 961.4,448.8 962.8,448.9 964.2,449.1 965.6,449.2 967.1,449.3 968.5,449.4 969.9,449.6 971.3,449.7 972.7,449.8 974.1,449.9 975.5,450.1 976.9,450.2 978.3,450.3 979.7,450.4 981.1,450.6 982.5,450.7 983.9,450.8 985.4,450.9 986.8,451.0 988.2,451.1 989.6,451.3 991.0,451.4 992.4,451.5 993.8,451.6 995.2,451.7 996.6,451.8 998.0,451.9 999.4,452.1 1000.8,452.2 1002.2,452.3 1003.7,452.4 1005.1,452.5 1006.5,452.6 1007.9,452.7 1009.3,452.8 1010.7,452.9 1012.1,453.0 1013.5,453.2 1014.9,453.3 1016.3,453.4 1017.7,453.5 1019.1,453.6 1020.6,453.7 1022.0,453.8 1023.4,453.9 1024.8,454.0 1026.2,454.1 1027.6,454.2 1029.0,454.3 1030.4,454.4 1031.8,454.5 1033.2,454.6 1034.6,454.7 1036.0,454.8 1037.4,454.9 1038.9,455.0 1040.3,455.1 1041.7,455.2 1043.1,455.3 1044.5,455.4 1045.9,455.5 1047.3,455.6 1048.7,455.7 1050.1,455.7 1051.5,455.8 1052.9,455.9 1054.3,456.0 1055.7,456.1 1057.2,456.2 1058.6,456.3 1060.0,456.4 1061.4,456.5 1062.8,456.6 1064.2,456.7 1065.6,456.8 1067.0,456.8 1068.4,456.9 1069.8,457.0 1071.2,457.1 1072.6,457.2 1074.0,457.3 1075.5,457.4 1076.9,457.5 1078.3,457.5 1079.7,457.6 1081.1,457.7 1082.5,457.8 1083.9,457.9 1085.3,458.0 1086.7,458.1 1088.1,458.1 1089.5,458.2 1090.9,458.3 1092.4,458.4 1093.8,458.5 1095.2,458.6 1096.6,458.6 1098.0,458.7 1099.4,458.8 1100.8,458.9 1102.2,459.0 1103.6,459.0 1105.0,459.1 1106.4,459.2 1107.8,459.3 1109.2,459.4 1110.7,459.4 1112.1,459.5 1113.5,459.6 1114.9,459.7 1116.3,459.8 1117.7,459.8 1119.1,459.9 1120.5,460.0 1121.9,460.1 1123.3,460.1 1124.7,460.2 1126.1,460.3 1127.5,460.4 1129.0,460.4"/>
<polyline fill="none" stroke="#1f6a22" stroke-width="4" stroke-linejoin="round" points="755.9,334.0 755.9,382.0 757.3,385.6 758.7,388.6 760.1,391.3 761.5,393.6 762.9,395.7 764.3,397.6 765.7,399.3 767.1,400.8 768.5,402.3 770.0,403.6 771.4,404.9 772.8,406.1 774.2,407.2 775.6,408.2 777.0,409.2 778.4,410.2 779.8,411.1 781.2,412.0 782.6,412.8 784.0,413.6 785.4,414.3 786.8,415.1 788.3,415.8 789.7,416.5 791.1,417.1 792.5,417.8 793.9,418.4 795.3,419.0 796.7,419.6 798.1,420.1 799.5,420.7 800.9,421.2 802.3,421.7 803.7,422.2 805.2,422.7 806.6,423.2 808.0,423.7 809.4,424.1 810.8,424.6 812.2,425.0 813.6,425.5 815.0,425.9 816.4,426.3 817.8,426.7 819.2,427.1 820.6,427.5 822.0,427.9 823.5,428.2 824.9,428.6 826.3,428.9 827.7,429.3 829.1,429.6 830.5,430.0 831.9,430.3 833.3,430.6 834.7,431.0 836.1,431.3 837.5,431.6 838.9,431.9 840.3,432.2 841.8,432.5 843.2,432.8 844.6,433.1 846.0,433.4 847.4,433.7 848.8,433.9 850.2,434.2 851.6,434.5 853.0,434.7 854.4,435.0 855.8,435.3 857.2,435.5 858.6,435.8 860.1,436.0 861.5,436.3 862.9,436.5 864.3,436.8 865.7,437.0 867.1,437.2 868.5,437.5 869.9,437.7 871.3,437.9 872.7,438.1 874.1,438.4 875.5,438.6 877.0,438.8 878.4,439.0 879.8,439.2 881.2,439.4 882.6,439.6 884.0,439.9 885.4,440.1 886.8,440.3 888.2,440.5 889.6,440.7 891.0,440.8 892.4,441.0 893.8,441.2 895.3,441.4 896.7,441.6 898.1,441.8 899.5,442.0 900.9,442.2 902.3,442.3 903.7,442.5 905.1,442.7 906.5,442.9 907.9,443.1 909.3,443.2 910.7,443.4 912.1,443.6 913.6,443.7 915.0,443.9 916.4,444.1 917.8,444.2 919.2,444.4 920.6,444.6 922.0,444.7 923.4,444.9 924.8,445.0 926.2,445.2 927.6,445.4 929.0,445.5 930.4,445.7 931.9,445.8 933.3,446.0 934.7,446.1 936.1,446.3 937.5,446.4 938.9,446.6 940.3,446.7 941.7,446.9 943.1,447.0 944.5,447.1 945.9,447.3 947.3,447.4 948.8,447.6 950.2,447.7 951.6,447.8 953.0,448.0 954.4,448.1 955.8,448.3 957.2,448.4 958.6,448.5 960.0,448.7 961.4,448.8 962.8,448.9 964.2,449.1 965.6,449.2 967.1,449.3 968.5,449.4 969.9,449.6 971.3,449.7 972.7,449.8 974.1,449.9 975.5,450.1 976.9,450.2 978.3,450.3 979.7,450.4 981.1,450.6 982.5,450.7 983.9,450.8 985.4,450.9 986.8,451.0 988.2,451.1 989.6,451.3 991.0,451.4 992.4,451.5 993.8,451.6 995.2,451.7 996.6,451.8 998.0,451.9 999.4,452.1 1000.8,452.2 1002.2,452.3 1003.7,452.4 1005.1,452.5 1006.5,452.6 1007.9,452.7 1009.3,452.8 1010.7,452.9 1012.1,453.0 1013.5,453.2 1014.9,453.3 1016.3,453.4 1017.7,453.5 1019.1,453.6 1020.6,453.7 1022.0,453.8 1023.4,453.9 1024.8,454.0 1026.2,454.1 1027.6,454.2 1029.0,454.3 1030.4,454.4 1031.8,454.5 1033.2,454.6 1034.6,454.7 1036.0,454.8 1037.4,454.9 1038.9,455.0 1040.3,455.1 1041.7,455.2 1043.1,455.3 1044.5,455.4 1045.9,455.5 1047.3,455.6 1048.7,455.7 1050.1,455.7 1051.5,455.8 1052.9,455.9 1054.3,456.0 1055.7,456.1 1057.2,456.2 1058.6,456.3 1060.0,456.4 1061.4,456.5 1062.8,456.6 1064.2,456.7 1065.6,456.8 1067.0,456.8 1068.4,456.9 1069.8,457.0 1071.2,457.1 1072.6,457.2 1074.0,457.3 1075.5,457.4 1076.9,457.5 1078.3,457.5 1079.7,457.6 1081.1,457.7 1082.5,457.8 1083.9,457.9 1085.3,458.0 1086.7,458.1 1088.1,458.1 1089.5,458.2 1090.9,458.3 1092.4,458.4 1093.8,458.5 1095.2,458.6 1096.6,458.6 1098.0,458.7 1099.4,458.8 1100.8,458.9 1102.2,459.0 1103.6,459.0 1105.0,459.1 1106.4,459.2 1107.8,459.3 1109.2,459.4 1110.7,459.4 1112.1,459.5 1113.5,459.6 1114.9,459.7 1116.3,459.8 1117.7,459.8 1119.1,459.9 1120.5,460.0 1121.9,460.1 1123.3,460.1 1124.7,460.2 1126.1,460.3 1127.5,460.4 1129.0,460.4"/>
</g>
<text x="705.5" y="602.0" font-family="Liberation Sans" font-size="12" fill="#222">10</text>
<text x="719.5" y="595.5" font-family="Liberation Sans" font-size="9" fill="#222">-3</text>
<text x="705.5" y="557.7" font-family="Liberation Sans" font-size="12" fill="#222">10</text>
<text x="719.5" y="551.2" font-family="Liberation Sans" font-size="9" fill="#222">-2</text>
<text x="705.5" y="513.4" font-family="Liberation Sans" font-size="12" fill="#222">10</text>
<text x="719.5" y="506.9" font-family="Liberation Sans" font-size="9" fill="#222">-1</text>
<text x="705.5" y="469.1" font-family="Liberation Sans" font-size="12" fill="#222">10</text>
<text x="719.5" y="462.6" font-family="Liberation Sans" font-size="9" fill="#222">0</text>
<text x="705.5" y="424.8" font-family="Liberation Sans" font-size="12" fill="#222">10</text>
<text x="719.5" y="418.3" font-family="Liberation Sans" font-size="9" fill="#222">1</text>
<text x="705.5" y="380.5" font-family="Liberation Sans" font-size="12" fill="#222">10</text>
<text x="719.5" y="374.0" font-family="Liberation Sans" font-size="9" fill="#222">2</text>
<text x="738.1" y="622.5" font-family="Liberation Sans" font-size="12" fill="#222">10</text>
<text x="751.6" y="616" font-family="Liberation Sans" font-size="9" fill="#222">0</text>
<text x="901.8" y="622.5" font-family="Liberation Sans" font-size="12" fill="#222">10</text>
<text x="915.3" y="616" font-family="Liberation Sans" font-size="9" fill="#222">1</text>
<text x="1065.5" y="622.5" font-family="Liberation Sans" font-size="12" fill="#222">10</text>
<text x="1079.0" y="616" font-family="Liberation Sans" font-size="9" fill="#222">2</text>
<text x="920.5" y="642" font-family="Liberation Sans" font-size="12" font-weight="bold" fill="#222">Iref</text>
<text transform="translate(692.5,474) rotate(-90)" font-family="Liberation Sans" font-size="11" font-weight="bold" fill="#222">t/s</text>
</svg>

<div class="a btn" style="left:912px;top:661px;width:228px;height:26px">Save as User-defined ...</div>
<div class="a btn" style="left:972px;top:724px;width:92px;height:26px">OK</div>
<div class="a btn" style="left:1073px;top:724px;width:92px;height:26px">Cancel</div>
<svg class="a" style="left:1160px;top:745px" width="14" height="14"><g fill="#b8b8b8"><rect x="10" y="2" width="2" height="2"/><rect x="6" y="6" width="2" height="2"/><rect x="10" y="6" width="2" height="2"/><rect x="2" y="10" width="2" height="2"/><rect x="6" y="10" width="2" height="2"/><rect x="10" y="10" width="2" height="2"/></g></svg>
</body></html>
